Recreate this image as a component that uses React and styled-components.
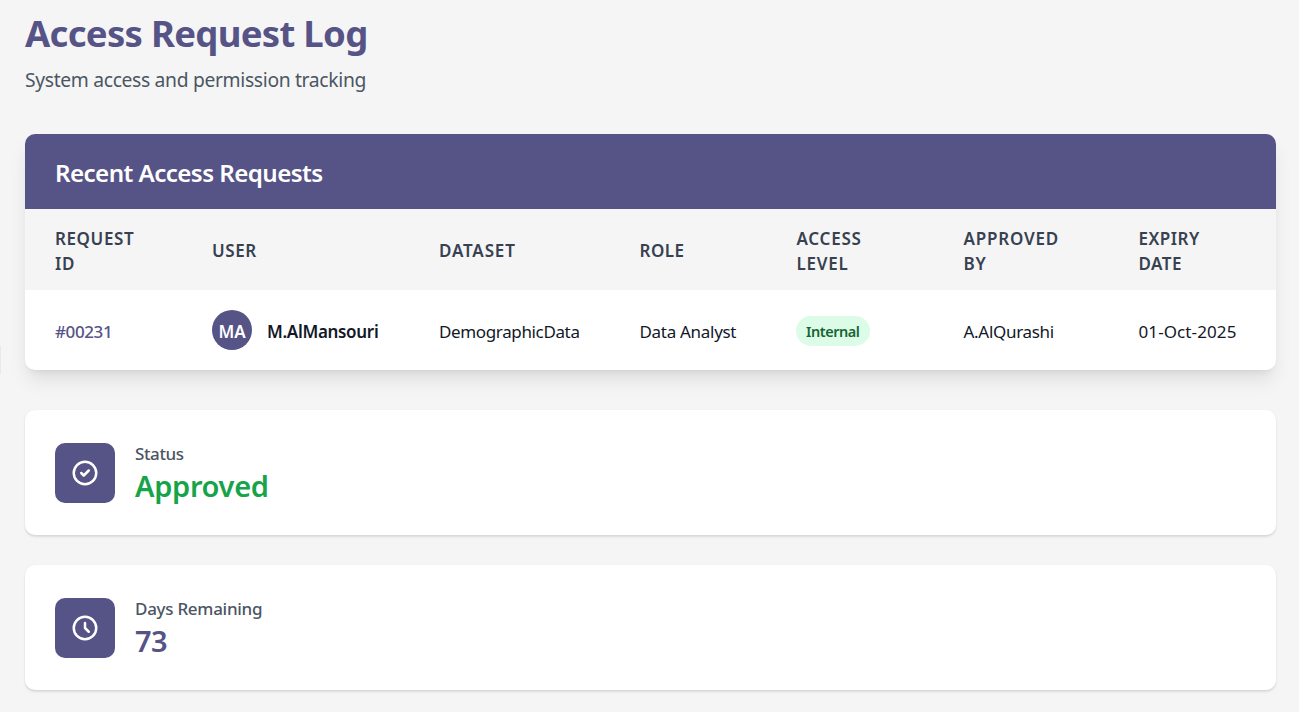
import React from 'react';
import styled, { createGlobalStyle } from 'styled-components';

const Global = createGlobalStyle`
  *, *::before, *::after { box-sizing: border-box; }
  body { margin: 0; background: #f5f5f5; font-family: "Noto Sans", "Open Sans", sans-serif; color: #111827; overflow: hidden; }
  h1, h2, p { margin: 0; }
`;

const Page = styled.main`
  position: relative;
  height: 712px;
  padding: 11px 23px 0 25px;
`;

const EdgeHandle = styled.span`
  position: absolute;
  left: 0;
  top: 346px;
  width: 1px;
  height: 28px;
  background: #e9e9e9;
`;

const Fit = styled.span`
  letter-spacing: ${(p) => p.$ls || 0}px;
`;

const Title = styled.h1`
  font-size: 36.5px;
  line-height: 45px;
  font-weight: 700;
  color: #565386;
`;

const Subtitle = styled.p`
  margin-top: 9px;
  font-size: 19.3px;
  line-height: 30px;
  color: #4b5563;
`;

const TableCard = styled.section`
  margin-top: 39px;
  border-radius: 10px;
  overflow: hidden;
  background: #fff;
  box-shadow: 0 12.5px 18.75px -3.75px rgba(0, 0, 0, 0.1), 0 5px 7.5px -5px rgba(0, 0, 0, 0.1);
`;

const CardHeader = styled.header`
  height: 75px;
  padding: 21px 30px 19px;
  background: #565386;
  color: #fff;
`;

const CardTitle = styled.h2`
  font-size: 24.2px;
  line-height: 35px;
  font-weight: 600;
`;

const Table = styled.table`
  width: 100%;
  table-layout: fixed;
  border-collapse: collapse;
`;

const Th = styled.th`
  height: 81px;
  padding: 2px 30px 0;
  background: #f5f5f5;
  text-align: left;
  vertical-align: middle;
  font-size: 17px;
  line-height: 25px;
  font-weight: 600;
  color: #374151;
  text-transform: uppercase;

  &:last-child { padding-right: 60px; }
`;

const Td = styled.td`
  height: 80px;
  padding: 2px 0 0 30px;
  vertical-align: middle;
  white-space: nowrap;
  font-size: 17px;
  line-height: 25px;
  font-weight: ${(p) => (p.$strong ? 500 : 400)};
  color: ${(p) => (p.$accent ? '#565386' : '#111827')};
`;

const User = styled.div`
  display: flex;
  align-items: center;
  gap: 15px;
  font-weight: 600;
`;

const Avatar = styled.span`
  display: flex;
  align-items: center;
  justify-content: center;
  width: 40px;
  height: 40px;
  margin-top: -2px;
  padding-top: 2px;
  border-radius: 50%;
  background: #565386;
  color: #fff;
`;

const Badge = styled.span`
  display: inline-block;
  margin-left: -0.5px;
  padding: 5px 10px;
  border-radius: 15px;
  background: #dcfce7;
  color: #166534;
  font-size: 14.5px;
  line-height: 20px;
  font-weight: 600;
  vertical-align: middle;
`;

const StatCard = styled.section`
  display: flex;
  align-items: center;
  gap: 20px;
  height: 125px;
  margin-top: ${(p) => p.$gap}px;
  padding: 0 30px;
  border-radius: 10px;
  background: #fff;
  box-shadow: 0 1.25px 2.5px rgba(0, 0, 0, 0.1), 0 1.25px 2.5px -1.25px rgba(0, 0, 0, 0.08);
`;

const IconTile = styled.div`
  display: flex;
  align-items: center;
  justify-content: center;
  width: 60px;
  height: 60px;
  border-radius: 10px;
  background: #565386;
  color: #fff;
`;

const StatText = styled.div`
  padding-top: 2px;
`;

const StatLabel = styled.p`
  font-size: 17px;
  line-height: 25px;
  font-weight: 500;
  color: #4b5563;
`;

const StatValue = styled.p`
  font-size: 29px;
  line-height: 40px;
  font-weight: 600;
  color: ${(p) => p.$color};
`;

const Icon = ({ d }) => (
  <svg width="30" height="30" viewBox="0 0 24 24" fill="none" stroke="currentColor" strokeWidth="2" strokeLinecap="round" strokeLinejoin="round">
    <path d={d} />
  </svg>
);

const columns = [
  { label: 'Request ID', width: 157, ls: 0.6 },
  { label: 'User', width: 227, ls: 0.6 },
  { label: 'Dataset', width: 200.5, ls: 0.85 },
  { label: 'Role', width: 157, ls: 0.5 },
  { label: 'Access Level', width: 167, ls: 0.75 },
  { label: 'Approved By', width: 175, ls: 0.8 },
  { label: 'Expiry Date', width: 167.5, ls: 0.5 },
];

const stats = [
  { label: 'Status', value: 'Approved', color: '#16a34a', gap: 40, icon: 'M9 12l2 2 4-4m6 2a9 9 0 11-18 0 9 9 0 0118 0z', labelLs: -0.4, valueLs: -0.3 },
  { label: 'Days Remaining', value: '73', color: '#565386', gap: 30, icon: 'M12 8v4l3 3m6-3a9 9 0 11-18 0 9 9 0 0118 0z', labelLs: -0.28, valueLs: -0.6 },
];

export default function App() {
  return (
    <Page>
      <Global />
      <EdgeHandle />
      <Title><Fit $ls={-0.7}>Access Request Log</Fit></Title>
      <Subtitle><Fit $ls={-0.33}>System access and permission tracking</Fit></Subtitle>
      <TableCard>
        <CardHeader><CardTitle><Fit $ls={-0.58}>Recent Access Requests</Fit></CardTitle></CardHeader>
        <Table>
          <colgroup>{columns.map((c) => <col key={c.label} style={{ width: c.width }} />)}</colgroup>
          <thead>
            <tr>{columns.map((c) => <Th key={c.label}><Fit $ls={c.ls}>{c.label}</Fit></Th>)}</tr>
          </thead>
          <tbody>
            <tr>
              <Td $accent $strong><Fit $ls={-0.4}>#00231</Fit></Td>
              <Td><User><Avatar>MA</Avatar><Fit $ls={-0.32}>M.AlMansouri</Fit></User></Td>
              <Td><Fit $ls={-0.36}>DemographicData</Fit></Td>
              <Td><Fit $ls={-0.3}>Data Analyst</Fit></Td>
              <Td><Badge><Fit $ls={-0.45}>Internal</Fit></Badge></Td>
              <Td><Fit $ls={-0.3}>A.AlQurashi</Fit></Td>
              <Td><Fit $ls={0.1}>01-Oct-2025</Fit></Td>
            </tr>
          </tbody>
        </Table>
      </TableCard>
      {stats.map((s) => (
        <StatCard key={s.label} $gap={s.gap}>
          <IconTile><Icon d={s.icon} /></IconTile>
          <StatText>
            <StatLabel><Fit $ls={s.labelLs}>{s.label}</Fit></StatLabel>
            <StatValue $color={s.color}><Fit $ls={s.valueLs}>{s.value}</Fit></StatValue>
          </StatText>
        </StatCard>
      ))}
    </Page>
  );
}
